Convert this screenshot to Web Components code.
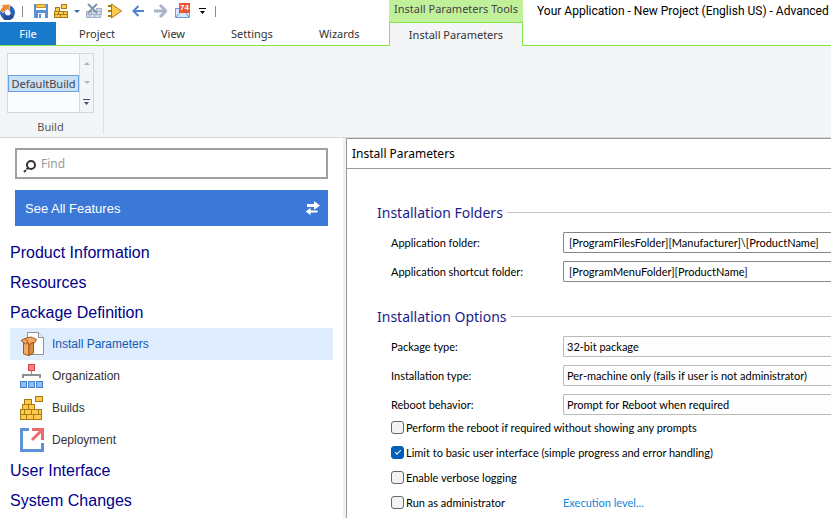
<!DOCTYPE html>
<html lang="en">
<head>
<meta charset="utf-8">
<title>Your Application - New Project</title>
<style>
    body {
        margin: 0;
        height: 100vh;
        overflow: hidden;
        background: #fff;
        font-family: "Noto Sans", sans-serif;
        font-size: 11px;
        color: #222;
    }
</style>
</head>
<body>
<app-window></app-window>

<script>
const brick = 'fill="#ffc94f" stroke="#a87b10"';

const icons = {
    logo: [16, 18, `
        <circle cx="7.500" cy="10.500" r="5" fill="none" stroke="#2e63b5" stroke-width="5"/>
        <path d="M3 17a8 8 0 0 0 11-2l-4-3-5 1z" fill="#244f96"/>
        <path d="M1 3l9-1-1 7-2-2-4 4-3-3 3-3z" fill="#f58a2a" stroke="#fff" stroke-width=".6"/>
        <circle cx="8" cy="11" r="2.500" fill="#fff"/>`],
    save: [14, 14, `
        <path d="M0 0h14v14h-3V9H4v5H0z" fill="#5b8fd6"/>
        <path d="M2 0h10v6H2z" fill="#fff"/>
        <path d="M2.500.5h9v3h-9z" fill="#ffc94f" stroke="#c5922a"/>
        <path d="M5 10h2v4H5z" fill="#5b8fd6"/>`],
    bricks: [14, 15, `
        <g shape-rendering="crispEdges" ${brick}>
        <path d="M7.500.5h5v4h-5zM1.500 3.500h4v4h-4zM.5 7.500h4v3h-4zM4.500 7.500h5v3h-5zM9.500 7.500h4v3h-4zM.5 10.500h6v3h-6zM6.500 10.500h7v3h-7z"/></g>`],
    clean: [16, 16, `
        <g shape-rendering="crispEdges" fill="#d3dcea" stroke="#a3b1c8">
        <path d="M.5 8.500h5v3h-5zM5.500 8.500h5v3h-5zM10.500 8.500h5v3h-5zM.5 11.500h3v3h-3zM3.500 11.500h5v3h-5zM8.500 11.500h6v3h-6zM10.500 5.500h5v3h-5z"/></g>
        <path d="M2 1l9 9M11 1L2 10" stroke="#8193af" stroke-width="2"/>`],
    run: [14, 16, `
        <path d="M3.500 1l10 7-10 7z" fill="#ffc94f" stroke="#a87b10"/>
        <path d="M0 3h3M0 8h3M0 13h3" stroke="#a87b10" stroke-width="2"/>`],
    back: [12, 12, `<path d="M12 6H2M6.500 1L1.500 6l5 5" fill="none" stroke="#4c84d3" stroke-width="2"/>`],
    forward: [13, 14, `<path d="M0 7h11M6 1l6 6-6 6" fill="none" stroke="#aab6c8" stroke-width="3"/>`],
    mail: [16, 14, `
        <path d="M.5 4.500h14v9H.5z" fill="#d6e6fb" stroke="#6e9ad8"/>
        <path d="M1 13l5-5M14 13l-4-5" stroke="#6e9ad8"/>`],
    down: [6, 3, `<path d="M0 0h6L3 3z" fill="currentColor"/>`],
    up: [6, 3, `<path d="M0 3h6L3 0z" fill="currentColor"/>`],
    more: [7, 6, `<path d="M0 0h7v1H0zM1 3h5L3.500 6z" fill="currentColor"/>`],
    find: [13, 13, `
        <circle cx="8" cy="5" r="4" fill="none" stroke="#333" stroke-width="2"/>
        <path d="M5 8l-4 4" stroke="#333" stroke-width="2" stroke-dasharray="2 1 3"/>`],
    swap: [15, 15, `
        <path d="M2 3h7V0l6 4.500L9 9V6H2z" fill="#fff"/>
        <path d="M13 9H6V6L0 10.500 6 15v-3h7z" fill="#fff" stroke="#3c78d8"/>`],
    install: [24, 24, `
        <path d="M7.500.5h11l5 5v17h-16z" fill="#fff" stroke="#8d9299"/>
        <path d="M18.500.5v5h5" fill="#eef1f4" stroke="#8d9299"/>
        <path d="M3.500 11h5.500v12.500l-5.500-1.500z" fill="#f5a868" stroke="#a5570f"/>
        <path d="M9 12.500l4.500-2V21L9 23.500z" fill="#d98a45" stroke="#a5570f"/>
        <path d="M1 8.500l4-2 4 2.500L5.500 12z" fill="#f5a868" stroke="#a5570f"/>
        <path d="M5 6.500L11 5l5.500 2.500-2 3.500-2.500-.5L9 13 8 10z" fill="#f5a868" stroke="#a5570f"/>`],
    organization: [24, 24, `
        <g shape-rendering="crispEdges">
        <path d="M8.500.5h6v6h-6z" fill="#ff8080" stroke="#cc4444"/>
        <path d="M11 7h1v4h-1zM2 10h19v4h-2v-2H4v2H2z" fill="#8b9097"/>
        <path d="M.5 17.500h6v6h-6zM8.500 17.500h6v6h-6zM16.500 17.500h6v6h-6z" fill="#8dbcf2" stroke="#4581cc"/></g>`],
    builds: [24, 24, `
        <g shape-rendering="crispEdges" ${brick}>
        <path d="M15.500.5h7v5h-7zM4.500 3.500h7v5h-7zM2.500 8.500h6v5h-6zM8.500 8.500h6v5h-6zM.5 13.500h4v5h-4zM4.500 13.500h7v5h-7zM11.500 13.500h7v5h-7zM18.500 13.500h3v5h-3zM.5 18.500h6v5h-6zM6.500 18.500h7v5h-7zM13.500 18.500h8v5h-8z"/></g>`],
    deployment: [24, 24, `
        <path d="M9 0v3H3v18h18v-6h3v9H0V0z" fill="#5e93d8"/>
        <path d="M12 0h12v12h-3V5L13 13l-2-2 8-8h-7z" fill="#ea6b6b"/>`]
};

class UiIcon extends HTMLElement {
    constructor() {
        super();
        this.attachShadow({ mode: 'open' });
    }

    connectedCallback() {
        const [w, h, body] = icons[this.getAttribute('name')];
        this.shadowRoot.innerHTML = `
            <style>
                :host { display: inline-flex; flex: none; }
            </style>
            <svg width="${w}" height="${h}" viewBox="0 0 ${w} ${h}" aria-hidden="true">${body}</svg>
        `;
    }
}

class QuickToolbar extends HTMLElement {
    constructor() {
        super();
        this.attachShadow({ mode: 'open' });
        this.shadowRoot.innerHTML = `
            <style>
                :host { display: flex; align-items: center; gap: 6px; height: 22px; }
                button { display: flex; position: relative; padding: 0; border: 0; background: none; color: #000; }
                .blue { color: #3c69ad; }
                .wide { margin: 0 4px; }
                .message { margin: 0 2px; }
                hr { width: 1px; height: 11px; margin: 0 5px 0 0; border: 0; background: #888; }
                .last { margin-left: 3px; }
                .badge {
                    position: absolute;
                    top: -1px;
                    left: 4px;
                    padding: 0 1px;
                    background: #ec5333;
                    color: #fff;
                    font-size: 8px;
                    line-height: 10px;
                    font-weight: bold;
                }
            </style>
            <ui-icon name="logo"></ui-icon>
            <hr>
            <button aria-label="Save"><ui-icon name="save"></ui-icon></button>
            <button aria-label="Build"><ui-icon name="bricks"></ui-icon></button>
            <button aria-label="Build options" class="blue"><ui-icon name="down"></ui-icon></button>
            <button aria-label="Clean"><ui-icon name="clean"></ui-icon></button>
            <button aria-label="Run"><ui-icon name="run"></ui-icon></button>
            <button aria-label="Back" class="wide"><ui-icon name="back"></ui-icon></button>
            <button aria-label="Forward"><ui-icon name="forward"></ui-icon></button>
            <button aria-label="Messages" class="message"><ui-icon name="mail"></ui-icon><span class="badge">74</span></button>
            <button aria-label="Customize"><ui-icon name="more"></ui-icon></button>
            <hr class="last">
        `;
    }
}

class RibbonTabs extends HTMLElement {
    constructor() {
        super();
        this.attachShadow({ mode: 'open' });
        this.shadowRoot.innerHTML = `
            <style>
                :host {
                    display: grid;
                    grid-template-columns: 389px 134px 1fr;
                    grid-template-rows: 22px 24px;
                    background: #fff;
                }
                .context {
                    background: #c1f09b;
                    color: #444;
                    text-align: center;
                    line-height: 18px;
                    white-space: nowrap;
                }
                .title {
                    padding-left: 14px;
                    color: #000;
                    font: 12px/22px Roboto, sans-serif;
                    white-space: nowrap;
                    overflow: hidden;
                }
                nav { display: flex; border-bottom: 1px solid #82e547; }
                button {
                    padding: 0 18px;
                    border: 0;
                    background: none;
                    color: #333;
                    font: inherit;
                    white-space: nowrap;
                }
                .file { width: 56px; margin-right: 5px; background: #1979ca; color: #fff; }
                .roomy { padding: 0 28px; }
                .active {
                    border: 1px solid #82e547;
                    border-bottom: 0;
                    background: #f4f5f7;
                }
                .rest { border-bottom: 1px solid #82e547; }
            </style>
            <quick-toolbar></quick-toolbar>
            <div class="context">Install Parameters Tools</div>
            <div class="title">Your Application - New Project (English US) - Advanced</div>
            <nav>
                <button class="file">File</button>
                <button>Project</button>
                <button class="roomy">View</button>
                <button>Settings</button>
                <button class="roomy">Wizards</button>
            </nav>
            <button class="active">Install Parameters</button>
            <div class="rest"></div>
        `;
    }
}

class BuildRibbon extends HTMLElement {
    constructor() {
        super();
        this.attachShadow({ mode: 'open' });
        this.shadowRoot.innerHTML = `
            <style>
                :host {
                    display: flex;
                    height: 91px;
                    background: #f4f5f7;
                    border-bottom: 1px solid #d5d7da;
                }
                .group {
                    display: flex;
                    flex-direction: column;
                    align-items: center;
                    margin: 2px 0 3px;
                    padding: 5px 9px 0 7px;
                    border-right: 1px solid #dfe1e5;
                    color: #555;
                    line-height: 28px;
                }
                .gallery { display: flex; flex: none; height: 58px; border: 1px solid #d5d7da; background: #fbfcfe; }
                .items { display: flex; align-items: center; border-right: 1px solid #d5d7da; }
                .items button {
                    height: 17px;
                    width: 71px;
                    padding: 0;
                    border: 1px solid #66a0e0;
                    background: #cbe1f8;
                    color: #444;
                    font: inherit;
                    line-height: 15px;
                }
                .scroll { display: flex; flex-direction: column; width: 13px; background: #f4f5f7; }
                .scroll button {
                    flex: 1;
                    display: flex;
                    align-items: center;
                    justify-content: center;
                    padding: 0;
                    border: 0;
                    background: none;
                    color: #aab3c8;
                }
                .scroll button:last-child { color: #3d5277; }
            </style>
            <div class="group">
                <div class="gallery">
                    <div class="items"><button>DefaultBuild</button></div>
                    <div class="scroll">
                        <button aria-label="Previous"><ui-icon name="up"></ui-icon></button>
                        <button aria-label="Next"><ui-icon name="down"></ui-icon></button>
                        <button aria-label="More"><ui-icon name="more"></ui-icon></button>
                    </div>
                </div>
                Build
            </div>
        `;
    }
}

class NavItem extends HTMLElement {
    constructor() {
        super();
        this.attachShadow({ mode: 'open' });
    }

    connectedCallback() {
        const icon = this.getAttribute('icon');
        this.shadowRoot.innerHTML = `
            <style>
                :host { display: block; font-family: "Liberation Sans", Arial, sans-serif; }
                a {
                    display: flex;
                    align-items: center;
                    gap: 8px;
                    height: 30px;
                    color: #00008b;
                    font-size: 16px;
                    text-decoration: none;
                }
                :host([icon]) a {
                    height: 32px;
                    padding-left: 10px;
                    color: #333;
                    font-size: 12px;
                }
                :host([selected]) a { background: #e0edff; color: #1259b0; }
            </style>
            <a href="#">${icon ? `<ui-icon name="${icon}"></ui-icon>` : ''}<slot></slot></a>
        `;
    }
}

class SideBar extends HTMLElement {
    constructor() {
        super();
        this.attachShadow({ mode: 'open' });
        this.shadowRoot.innerHTML = `
            <style>
                :host {
                    display: block;
                    box-sizing: border-box;
                    padding: 10px 10px 0;
                    border-right: 3px solid #f0f0f0;
                }
                .search {
                    display: flex;
                    align-items: center;
                    gap: 5px;
                    height: 27px;
                    margin: 0 5px 11px;
                    padding-left: 6px;
                    border: 2px solid #a0a0a0;
                }
                .search ui-icon { padding-top: 5px; }
                input {
                    flex: 1;
                    min-width: 0;
                    padding: 0;
                    border: 0;
                    outline: 0;
                    background: none;
                    font: inherit;
                    font-size: 12px;
                }
                input::placeholder { color: #999; }
                .all {
                    display: flex;
                    align-items: center;
                    justify-content: space-between;
                    width: calc(100% - 10px);
                    height: 36px;
                    margin: 0 5px 12px;
                    padding: 0 8px 0 10px;
                    border: 0;
                    background: #3c78d8;
                    color: #fff;
                    font: 13px "Liberation Sans", Arial, sans-serif;
                }
            </style>
            <label class="search"><ui-icon name="find"></ui-icon><input type="text" placeholder="Find" aria-label="Find"></label>
            <button class="all">See All Features <ui-icon name="swap"></ui-icon></button>
            <nav>
                <nav-item>Product Information</nav-item>
                <nav-item>Resources</nav-item>
                <nav-item>Package Definition</nav-item>
                <nav-item icon="install" selected>Install Parameters</nav-item>
                <nav-item icon="organization">Organization</nav-item>
                <nav-item icon="builds">Builds</nav-item>
                <nav-item icon="deployment">Deployment</nav-item>
                <nav-item>User Interface</nav-item>
                <nav-item>System Changes</nav-item>
            </nav>
        `;
    }
}

class FormSection extends HTMLElement {
    constructor() {
        super();
        this.attachShadow({ mode: 'open' });
    }

    connectedCallback() {
        this.shadowRoot.innerHTML = `
            <style>
                :host { display: block; }
                h2 {
                    display: flex;
                    align-items: center;
                    gap: 4px;
                    height: 20px;
                    margin: 0 0 10px;
                    color: #1c1c8c;
                    font-size: 14px;
                    font-weight: normal;
                }
                h2::after { content: ""; flex: 1; height: 1px; background: #c4c4c4; }
                .body { display: grid; gap: 8px; padding-left: 14px; }
            </style>
            <h2>${this.getAttribute('heading')}</h2>
            <div class="body"><slot></slot></div>
            <slot name="options"></slot>
        `;
    }
}

class FormField extends HTMLElement {
    constructor() {
        super();
        this.attachShadow({ mode: 'open' });
    }

    connectedCallback() {
        const value = this.getAttribute('value');
        const control = this.getAttribute('type') === 'select'
            ? `<select id="control"><option>${value}</option></select>`
            : `<input id="control" type="text" value="${value}">`;
        this.shadowRoot.innerHTML = `
            <style>
                :host {
                    display: grid;
                    grid-template-columns: 172px 1fr;
                    align-items: center;
                    height: 21px;
                    color: #000;
                    font-family: Lato, sans-serif;
                }
                input, select {
                    appearance: none;
                    box-sizing: border-box;
                    width: 100%;
                    height: 21px;
                    border: 1px solid #858585;
                    border-right: 0;
                    border-radius: 2px 0 0 2px;
                    background: #fff;
                    color: #000;
                    font: inherit;
                }
                input { padding: 0 5px; }
                select { padding: 0 3px; border-color: #bbb; background: #fdfdfd; }
            </style>
            <label for="control">${this.getAttribute('label')}</label>
            ${control}
        `;
    }
}

class CheckOption extends HTMLElement {
    constructor() {
        super();
        this.attachShadow({ mode: 'open' });
    }

    connectedCallback() {
        this.shadowRoot.innerHTML = `
            <style>
                :host {
                    display: grid;
                    grid-template-columns: 172px 1fr;
                    align-items: center;
                    height: 25px;
                    padding-left: 14px;
                    color: #000;
                    font-family: Lato, sans-serif;
                    white-space: nowrap;
                }
                label { display: flex; align-items: center; gap: 2px; }
                input {
                    appearance: none;
                    flex: none;
                    width: 13px;
                    height: 13px;
                    margin: 0;
                    border: 1px solid #666;
                    border-radius: 3px;
                    background: #f3f3f3;
                }
                input:checked {
                    display: grid;
                    place-items: center;
                    border-color: #005fb8;
                    background: #005fb8;
                }
                input:checked::before {
                    content: "";
                    width: 5px;
                    height: 2px;
                    margin-bottom: 2px;
                    border: solid #fff;
                    border-width: 0 0 1px 1px;
                    transform: rotate(-45deg);
                }
                ::slotted(a) { color: #0f86dc; text-decoration: none; }
            </style>
            <label><input type="checkbox" ${this.hasAttribute('checked') ? 'checked' : ''}>${this.getAttribute('label')}</label>
            <slot></slot>
        `;
    }
}

class InstallPage extends HTMLElement {
    constructor() {
        super();
        this.attachShadow({ mode: 'open' });
        this.shadowRoot.innerHTML = `
            <style>
                :host {
                    display: flex;
                    flex-direction: column;
                    border: solid #999;
                    border-width: 1px 0 0 1px;
                }
                h1 {
                    margin: 0;
                    padding-left: 5px;
                    border-bottom: 1px solid #999;
                    color: #000;
                    font-size: 12px;
                    font-weight: normal;
                    line-height: 29px;
                }
                .content { display: flex; flex-direction: column; gap: 24px; padding: 33px 0 0 30px; }
            </style>
            <h1>Install Parameters</h1>
            <div class="content">
                <form-section heading="Installation Folders">
                    <form-field label="Application folder:" value="[ProgramFilesFolder][Manufacturer]\\[ProductName]"></form-field>
                    <form-field label="Application shortcut folder:" value="[ProgramMenuFolder][ProductName]"></form-field>
                </form-section>
                <form-section heading="Installation Options">
                    <form-field type="select" label="Package type:" value="32-bit package"></form-field>
                    <form-field type="select" label="Installation type:" value="Per-machine only (fails if user is not administrator)"></form-field>
                    <form-field type="select" label="Reboot behavior:" value="Prompt for Reboot when required"></form-field>
                    <check-option slot="options" label="Perform the reboot if required without showing any prompts"></check-option>
                    <check-option slot="options" label="Limit to basic user interface (simple progress and error handling)" checked></check-option>
                    <check-option slot="options" label="Enable verbose logging"></check-option>
                    <check-option slot="options" label="Run as administrator"><a href="#">Execution level...</a></check-option>
                </form-section>
            </div>
        `;
    }
}

class AppWindow extends HTMLElement {
    constructor() {
        super();
        this.attachShadow({ mode: 'open' });
        this.shadowRoot.innerHTML = `
            <style>
                :host { display: flex; flex-direction: column; height: 100%; }
                main { flex: 1; display: grid; grid-template-columns: 346px 1fr; min-height: 0; }
            </style>
            <ribbon-tabs></ribbon-tabs>
            <build-ribbon></build-ribbon>
            <main>
                <side-bar></side-bar>
                <install-page></install-page>
            </main>
        `;
    }
}

customElements.define('ui-icon', UiIcon);
customElements.define('quick-toolbar', QuickToolbar);
customElements.define('ribbon-tabs', RibbonTabs);
customElements.define('build-ribbon', BuildRibbon);
customElements.define('nav-item', NavItem);
customElements.define('side-bar', SideBar);
customElements.define('form-section', FormSection);
customElements.define('form-field', FormField);
customElements.define('check-option', CheckOption);
customElements.define('install-page', InstallPage);
customElements.define('app-window', AppWindow);
</script>
</body>
</html>
